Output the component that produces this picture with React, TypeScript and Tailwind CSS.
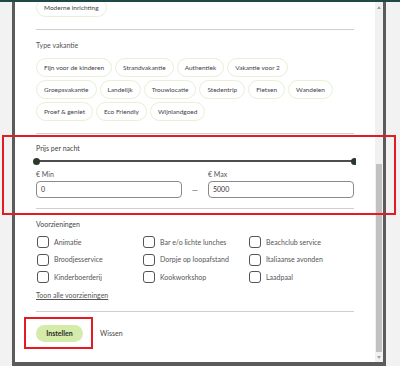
import React from 'react';

const typeChips = [
  ['Fijn voor de kinderen', 'Strandvakantie', 'Authentiek', 'Vakantie voor 2'],
  ['Groepsvakantie', 'Landelijk', 'Trouwlocatie', 'Stedentrip', 'Fietsen', 'Wandelen'],
  ['Proef & geniet', 'Eco Friendly', 'Wijnlandgoed'],
];

const facilities = [
  'Animatie',
  'Bar e/o lichte lunches',
  'Beachclub service',
  'Broodjesservice',
  'Dorpje op loopafstand',
  'Italiaanse avonden',
  'Kinderboerderij',
  'Kookworkshop',
  'Laadpaal',
];

const Chip: React.FC<{ label: string }> = ({ label }) => (
  <div className="h-[19px] px-[7px] flex items-center rounded-full border border-[#e8f0d6] text-[6.5px] text-[#444] whitespace-nowrap">
    {label}
  </div>
);

const Divider: React.FC<{ className?: string }> = ({ className }) => (
  <div className={`h-px bg-[#cfcfcf] ${className ?? ''}`} />
);

const App: React.FC = () => {
  return (
    <div
      className="relative w-[400px] h-[366px] bg-[#f2f2f2] flex flex-col overflow-hidden"
      style={{ fontFamily: 'Lato, "Open Sans", sans-serif' }}
    >
      {/* top strip of the page behind */}
      <div className="h-[2px] bg-[#1d4a48] shrink-0" />

      <div className="flex-1 flex pl-[12px]">
        <div className="w-[374px] border-x-[3px] border-b-[4px] border-[#5b5b5b] bg-white flex overflow-hidden">
          {/* content */}
          <div className="w-[341px] pl-[21px] overflow-hidden">
            <div className="w-[318px] flex flex-col -mt-[4px]">
              <div className="flex">
                <Chip label="Moderne inrichting" />
              </div>

              <Divider className="mt-[12px]" />

              <div className="mt-[10px] text-[7px] leading-[10px] text-[#555]">Type vakantie</div>
              <div className="mt-[8px] flex flex-col gap-[3px]">
                {typeChips.map((row, i) => (
                  <div key={i} className="flex gap-[3px]">
                    {row.map((c) => (
                      <Chip key={c} label={c} />
                    ))}
                  </div>
                ))}
              </div>

              <Divider className="mt-[12px]" />

              {/* price */}
              <div className="mt-[9px] text-[7px] leading-[10px] text-[#444]">Prijs per nacht</div>
              <div className="mt-[4px] relative h-[8px] flex items-center">
                <div className="w-full h-[1.5px] bg-[#4d4d4d]" />
                <div className="absolute left-[-3.5px] top-[0.5px] w-[7px] h-[7px] rounded-full bg-[#2d382d]" />
                <div className="absolute right-[-3.5px] top-[0.5px] w-[7px] h-[7px] rounded-full bg-[#2d382d]" />
              </div>
              <div className="mt-[4px] flex items-end">
                <div className="w-[146px] flex flex-col">
                  <div className="text-[7px] leading-[10px] text-[#555]">€ Min</div>
                  <div className="mt-[2px] h-[17px] border border-[#8a8a8a] rounded-[4px] flex items-center pl-[4px] text-[7px] text-[#333]">
                    0
                  </div>
                </div>
                <div className="flex-1 h-[17px] flex items-center justify-center text-[8px] text-[#555]">—</div>
                <div className="w-[146px] flex flex-col">
                  <div className="text-[7px] leading-[10px] text-[#555]">€ Max</div>
                  <div className="mt-[2px] h-[17px] border border-[#8a8a8a] rounded-[4px] flex items-center pl-[4px] text-[7px] text-[#333]">
                    5000
                  </div>
                </div>
              </div>

              <Divider className="mt-[10px]" />

              {/* facilities */}
              <div className="mt-[10px] text-[7px] leading-[10px] text-[#444]">Voorzieningen</div>
              <div className="mt-[7px] grid grid-cols-3 gap-y-[5.5px]">
                {facilities.map((f) => (
                  <div key={f} className="h-[12px] flex items-center gap-[5px] pl-[1px]">
                    <div className="w-[12px] h-[12px] rounded-[3px] border border-[#555] shrink-0" />
                    <span className="text-[7px] text-[#555] whitespace-nowrap">{f}</span>
                  </div>
                ))}
              </div>
              <div className="mt-[7px] text-[7px] leading-[10px] text-[#555] underline">Toon alle voorzieningen</div>

              <Divider className="mt-[11px]" />

              <div className="mt-[13px] flex items-center">
                <button className="h-[17px] w-[47px] rounded-full bg-[#d5ebaa] text-[7px] font-bold text-[#2b2b2b]">
                  Instellen
                </button>
                <span className="ml-[17px] text-[7px] text-[#444]">Wissen</span>
              </div>
            </div>
          </div>

          {/* scrollbar */}
          <div className="ml-auto w-[8px] bg-[#f1f1f1] flex flex-col items-center">
            <div className="h-[10px] flex items-center justify-center">
              <div className="w-0 h-0 border-x-[2.5px] border-x-transparent border-b-[3px] border-b-[#a3a3a3]" />
            </div>
            <div className="flex-1 w-[6px] flex flex-col">
              <div className="mt-auto h-[188px] bg-[#c1c1c1]" />
            </div>
            <div className="h-[10px] flex items-center justify-center">
              <div className="w-0 h-0 border-x-[2.5px] border-x-transparent border-t-[3px] border-t-[#a3a3a3]" />
            </div>
          </div>
        </div>
      </div>

      {/* annotation boxes */}
      <div className="absolute left-[2px] top-[135px] w-[394px] h-[80px] border-2 border-[#e31b23] pointer-events-none" />
      <div className="absolute left-[24px] top-[317px] w-[69px] h-[32px] border-2 border-[#e31b23] pointer-events-none" />
    </div>
  );
};

export default App;
